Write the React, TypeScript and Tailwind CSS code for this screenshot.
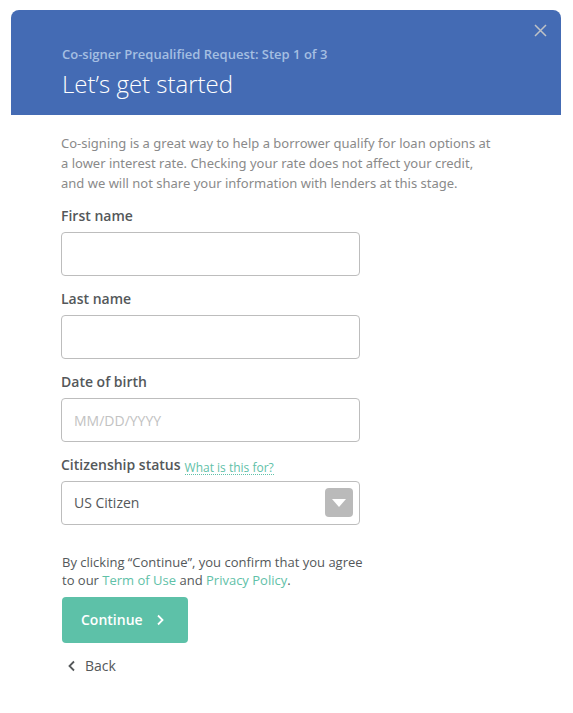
import React from "react";

const fieldClass =
  "block h-11 w-full rounded-sm border border-[#bdbdbd] bg-white px-3 text-sm text-[#54585a] placeholder:text-[#c2c2c2] outline-none focus:border-[#446bb4]";
const labelClass = "text-sm leading-5 font-semibold text-[#54585a]";

type TextFieldProps = { id: string; label: string; placeholder?: string };

function TextField({ id, label, placeholder }: TextFieldProps) {
  return (
    <div className="flex flex-col gap-1.5">
      <label htmlFor={id} className={labelClass}>
        {label}
      </label>
      <input id={id} type="text" placeholder={placeholder} className={fieldClass} />
    </div>
  );
}

export default function App() {
  return (
    <main className="min-h-screen bg-white pt-[10px] pr-3 pb-8 pl-[11px] font-['Open_Sans','Noto_Sans',sans-serif] text-[#54585a]">
      <header className="flex items-start justify-between rounded-t-lg bg-[#446bb4] pr-[14px] pb-[13px] pl-[51px]">
        <div className="pt-[34px]">
          <p className="text-[13px] leading-5 font-semibold text-[#a5bfe2]">
            Co-signer Prequalified Request: Step 1 of 3
          </p>
          <h1 className="pt-0.5 text-2xl leading-9 font-light text-white">Let’s get started</h1>
        </div>
        <button type="button" aria-label="Close" className="pt-[14px]">
          <svg width="13" height="13" viewBox="0 0 13 13" fill="none" stroke="#bfc2c6" strokeWidth="1.5">
            <path d="M1 1 12 12M12 1 1 12" />
          </svg>
        </button>
      </header>

      <div className="pt-[18px] pr-10 pl-[50px]">
        <p className="max-w-[450px] font-['Noto_Sans','Open_Sans',sans-serif] text-[13px] leading-5 text-[#8a8a8a]">
          Co-signing is a great way to help a borrower qualify for loan options at{" "}
          <br className="hidden min-[560px]:block" />a lower interest rate. Checking your rate does not affect your
          credit, <br className="hidden min-[560px]:block" />
          and we will not share your information with lenders at this stage.
        </p>

        <form className="pt-[13px]" onSubmit={(e) => e.preventDefault()}>
          <div className="flex max-w-[299px] flex-col gap-[13px]">
            <TextField id="first-name" label="First name" />
            <TextField id="last-name" label="Last name" />
            <TextField id="birth-date" label="Date of birth" placeholder="MM/DD/YYYY" />
            <div className="flex flex-col gap-1.5">
              <div className="flex items-end gap-1">
                <label htmlFor="citizenship" className={labelClass}>
                  Citizenship status
                </label>
                <a
                  href="#citizenship-help"
                  className="border-b border-dotted border-[#5fc1a8] text-xs leading-3 text-[#5fc1a8]"
                >
                  What is this for?
                </a>
              </div>
              <div className="relative">
                <select id="citizenship" className={fieldClass + " appearance-none"}>
                  <option>US Citizen</option>
                  <option>Permanent Resident</option>
                </select>
                <span className="pointer-events-none absolute top-[7px] right-[7px] flex h-[29px] w-7 items-center justify-center rounded-sm bg-[#bababa]">
                  <svg width="14" height="8" viewBox="0 0 14 8" fill="#fff">
                    <path d="M0 0h14L7 8z" />
                  </svg>
                </span>
              </div>
            </div>
          </div>

          <p className="max-w-[320px] pt-7 pl-px text-[13px] leading-[18px]">
            By clicking “Continue”, you confirm that you agree
            <br />
            to our{" "}
            <a href="#terms" className="text-[#5fc1a8]">
              Term of Use
            </a>{" "}
            and{" "}
            <a href="#privacy" className="text-[#5fc1a8]">
              Privacy Policy
            </a>
            .
          </p>

          <div className="flex flex-col items-start gap-[13px] pt-2 pl-px">
            <button
              type="submit"
              className="flex items-center gap-[14px] rounded bg-[#5dc1a8] py-[13px] pr-6 pl-[19px] text-sm leading-5 font-semibold text-white"
            >
              Continue
              <svg width="7" height="12" viewBox="0 0 7 12" fill="none" stroke="currentColor" strokeWidth="1.8">
                <path d="M1 1.5 5.5 6 1 10.5" />
              </svg>
            </button>
            <button type="button" className="flex items-center gap-[10px] pl-1.5 text-sm leading-5">
              <svg width="7" height="12" viewBox="0 0 7 12" fill="none" stroke="currentColor" strokeWidth="1.8">
                <path d="M6 1.5 1.5 6 6 10.5" />
              </svg>
              Back
            </button>
          </div>
        </form>
      </div>
    </main>
  );
}
